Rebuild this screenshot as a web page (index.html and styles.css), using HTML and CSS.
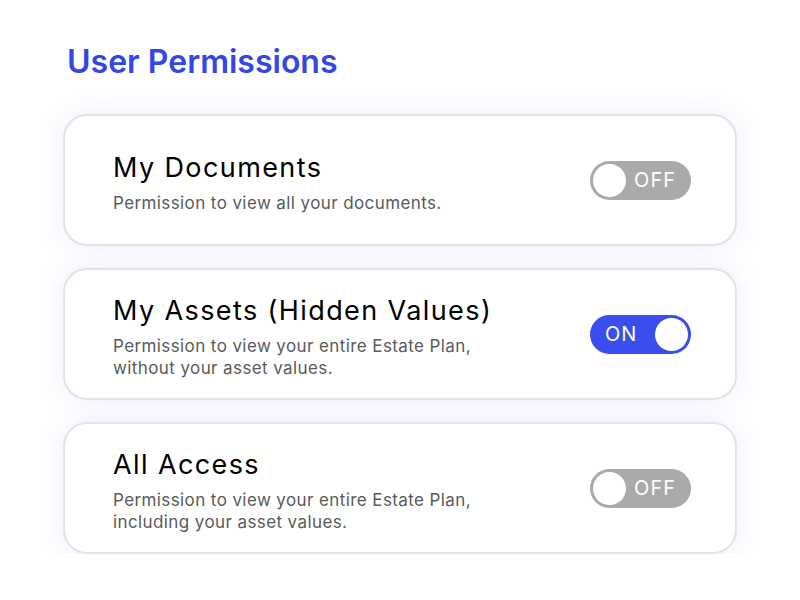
FILE: index.html
```html
<!DOCTYPE html>
<html lang="en">
<head>
    <meta charset="UTF-8">
    <meta name="viewport" content="width=device-width, initial-scale=1.0">
    <title>User Permissions</title>
    <link rel="stylesheet" href="styles.css">
</head>
<body>
    <div class="container">
        <h1 class="page-title">User Permissions</h1>

        <div class="card">
            <div class="card-text">
                <h2>My Documents</h2>
                <p>Permission to view all your documents.</p>
            </div>
            <div class="toggle off">
                <span class="knob"></span>
                <span class="label">OFF</span>
            </div>
        </div>

        <div class="card">
            <div class="card-text">
                <h2>My Assets (Hidden Values)</h2>
                <p>Permission to view your entire Estate Plan,<br>without your asset values.</p>
            </div>
            <div class="toggle on">
                <span class="label">ON</span>
                <span class="knob"></span>
            </div>
        </div>

        <div class="card">
            <div class="card-text">
                <h2>All Access</h2>
                <p>Permission to view your entire Estate Plan,<br>including your asset values.</p>
            </div>
            <div class="toggle off">
                <span class="knob"></span>
                <span class="label">OFF</span>
            </div>
        </div>
    </div>
</body>
</html>
```

FILE: styles.css
```css
body {
    margin: 0;
    background: #ffffff;
    font-family: 'Inter', 'Noto Sans', sans-serif;
    color: #000;
}
.container {
    padding: 42px 63px 0 63px;
    display: flex;
    flex-direction: column;
    gap: 22px;
}
.page-title {
    margin: 0 0 10px 4px;
    font-size: 32px;
    line-height: 40px;
    font-weight: 600;
    color: #3346e6;
}
.card {
    height: 132px;
    box-sizing: border-box;
    border: 2px solid #e2e2e8;
    border-radius: 24px;
    background: #fff;
    box-shadow: 0 0 26px rgba(90, 100, 230, 0.12);
    display: flex;
    align-items: center;
    justify-content: space-between;
    padding: 0 44px 0 48px;
}
.card-text h2 {
    margin: 5px 0 8px 0;
    font-size: 27px;
    line-height: 32px;
    font-weight: 400;
    letter-spacing: 1.4px;
}
.card-text p {
    margin: 0;
    font-size: 17px;
    line-height: 22px;
    color: #5a5a5a;
    letter-spacing: 0.4px;
}
.toggle {
    width: 101px;
    height: 39px;
    box-sizing: border-box;
    border-radius: 20px;
    padding: 0 3px;
    display: flex;
    align-items: center;
    justify-content: space-between;
    color: #fff;
    font-size: 20px;
    letter-spacing: 1px;
}
.toggle.off {
    background: #aaaaaa;
}
.toggle.on {
    background: #3a4ded;
}
.knob {
    width: 33px;
    height: 33px;
    border-radius: 50%;
    background: #fff;
}
.toggle.off .label {
    margin-right: 12px;
}
.toggle.on .label {
    margin-left: 12px;
}
```
